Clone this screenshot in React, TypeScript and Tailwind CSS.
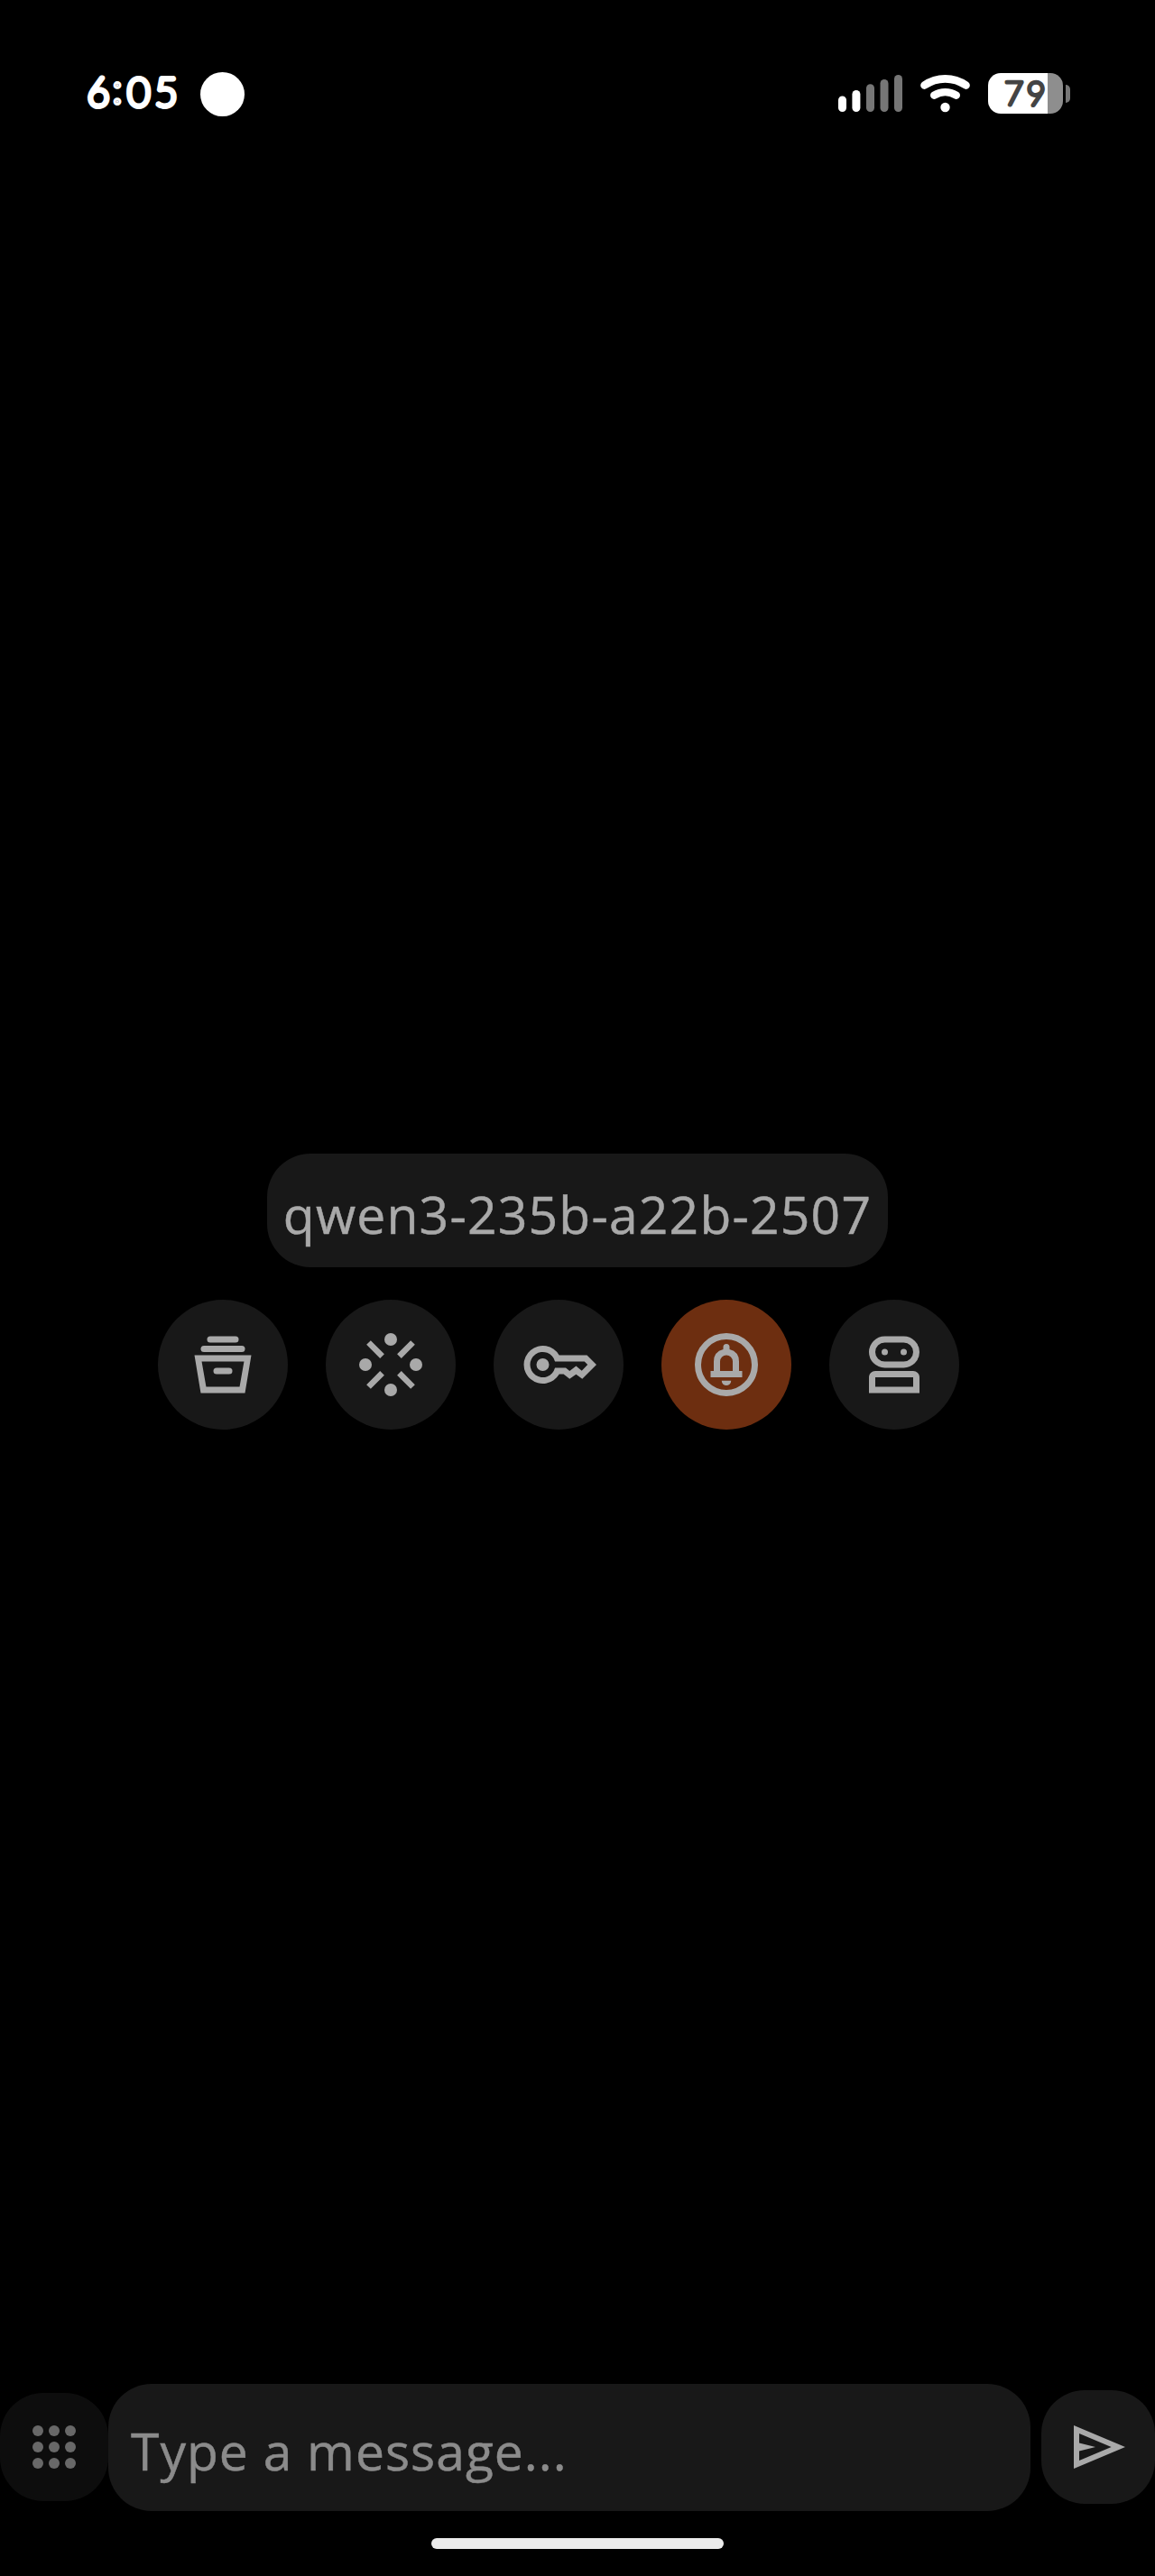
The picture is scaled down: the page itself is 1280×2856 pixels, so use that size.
import type { ReactNode } from "react";

function Signal() {
  return (
    <svg width="72" height="44" viewBox="929 82 72 44" aria-hidden="true">
      <rect x="929" y="106.5" width="9" height="17.5" rx="4.5" fill="#fff" />
      <rect x="944.4" y="100" width="9" height="24" rx="4.5" fill="#fff" />
      <rect x="960" y="93.3" width="9" height="30.7" rx="4.5" fill="#767676" />
      <rect x="975.5" y="88" width="9" height="36" rx="4.5" fill="#767676" />
      <rect x="991" y="83" width="9" height="41" rx="4.5" fill="#767676" />
    </svg>
  );
}

function Wifi() {
  return (
    <svg width="56" height="44" viewBox="1020 82 56 44" fill="none" stroke="#fff" strokeWidth="8.6" strokeLinecap="round" aria-hidden="true">
      <path d="M1024.5 94.6A40 40 0 0 1 1070.5 94.6" />
      <path d="M1035.3 105.6A24 24 0 0 1 1059.7 105.6" />
      <circle cx="1047.5" cy="119" r="5.2" fill="#fff" stroke="none" />
    </svg>
  );
}

function Battery() {
  return (
    <div className="mb-px flex items-center gap-[3px]">
      <div className="flex h-[45px] w-[83px] overflow-hidden rounded-[14px] bg-[linear-gradient(to_right,#fff_66px,#8e8e8e_66px)]">
        <svg className="block" width="83" height="45" viewBox="0 0 83 45" aria-hidden="true">
          <text x="28.7 53.3" y="35" textAnchor="middle" fontFamily="Lato, sans-serif" fontWeight="100" fontSize="36" fill="#444" stroke="#444" strokeWidth="4.6" strokeLinejoin="round">79</text>
        </svg>
      </div>
      <div className="h-5 w-[5px] rounded-r-[5px] bg-[#767676]" />
    </div>
  );
}

function StatusBar() {
  return (
    <header className="flex h-[208px] shrink-0 items-center justify-between pr-[94px] pl-[92px]">
      <div className="flex items-center gap-[18px]">
        <svg width="112" height="60" viewBox="0 0 112 60" aria-hidden="true">
          <text x="17 38 61.7 92.3" y="43.6 40.4 43.6 43.6" textAnchor="middle" fontFamily="Lato, sans-serif" fontWeight="100" fontSize="43" fill="#fff" stroke="#fff" strokeWidth="6" strokeLinejoin="round">6:05</text>
        </svg>
        <div className="mt-px size-[49px] rounded-full bg-white" />
      </div>
      <div className="flex items-center gap-[19px]">
        <Signal />
        <Wifi />
        <Battery />
      </div>
    </header>
  );
}

function ActionButton({ label, active = false, children }: { label: string; active?: boolean; children: ReactNode }) {
  return (
    <button
      aria-label={label}
      className={`flex size-36 items-center justify-center rounded-full text-[#a9a9a9] ${active ? "bg-[#6d2e10]" : "bg-[#181818]"}`}
    >
      <svg width="84" height="84" viewBox="0 0 24 24" fill="currentColor">
        {children}
      </svg>
    </button>
  );
}

function Actions() {
  return (
    <div className="mt-9 ml-[175px] flex gap-[42px]">
      <ActionButton label="History">
        <rect x="7" y="3" width="10" height="2" rx="1" />
        <rect x="5" y="6" width="14" height="2" rx="1" />
        <path fillRule="evenodd" d="M3 9H21L19 21H5ZM5.3 11L6.7 19H17.3L18.7 11Z" />
        <rect x="9" y="13" width="6" height="2" rx="1" />
      </ActionButton>
      <ActionButton label="Model">
        <circle cx="12" cy="4" r="2" />
        <circle cx="20" cy="12" r="2" />
        <circle cx="12" cy="20" r="2" />
        <circle cx="4" cy="12" r="2" />
        <path d="M5 5 9.3 9.3M19 5 14.7 9.3M5 19 9.3 14.7M19 19 14.7 14.7" stroke="currentColor" strokeWidth="1.9" />
      </ActionButton>
      <ActionButton label="API key">
        <path fillRule="evenodd" d="M12.2 9H21L24 12 19.5 16.5 17.55 15.05 15.5 16.5 13.6 15H12.2A6 6 0 1 1 12.2 9ZM10.87 13H14.3L15.5 14 17.55 12.4 19.35 13.9 21.2 12 20.2 11H10.87A4 4 0 1 0 10.87 13Z" />
        <circle cx="7" cy="12" r="2" />
      </ActionButton>
      <ActionButton label="Notifications" active>
        <circle cx="12" cy="12" r="9" fill="none" stroke="currentColor" strokeWidth="2" />
        <path fillRule="evenodd" d="M7 14H8V11Q8 7.9 11 7.15V6.4A1 1 0 0 1 13 6.4V7.15Q16 7.9 16 11V14H17V16H7ZM10 14H14V11A2 2 0 0 0 10 11Z" />
        <path d="M10.5 17.05H13.5A1.5 1.5 0 0 1 10.5 17.05Z" />
      </ActionButton>
      <ActionButton label="Assistant">
        <rect x="5" y="4" width="14" height="8" rx="4" fill="none" stroke="currentColor" strokeWidth="2" />
        <circle cx="9" cy="8" r="1" />
        <circle cx="15" cy="8" r="1" />
        <path fillRule="evenodd" d="M4 21V16A2 2 0 0 1 6 14H18A2 2 0 0 1 20 16V21ZM6 19H18V16H6Z" />
      </ActionButton>
    </div>
  );
}

function Composer() {
  return (
    <div className="flex items-start">
      <button aria-label="Menu" className="mt-2.5 grid size-[120px] shrink-0 grid-cols-[repeat(3,12px)] content-start gap-1.5 rounded-[48px] bg-[#0d0d0d] p-9">
        {Array.from({ length: 9 }, (_, i) => (
          <span key={i} className="size-3 rounded-full bg-[#686868]" />
        ))}
      </button>
      <div className="h-[141px] w-[1022px] rounded-[48px] bg-[#181818] pt-[9px] pl-[25px] font-['Open_Sans',sans-serif] text-[57px] leading-[130px] tracking-[1px] whitespace-nowrap text-[#8b8b8b] [-webkit-text-stroke:0.5px_#8b8b8b]">
        Type a message...
      </div>
      <button aria-label="Send" className="mt-[7px] ml-3 flex size-[126px] shrink-0 items-center justify-center rounded-[48px] bg-[#181818] text-[#a9a9a9]">
        <svg width="72" height="72" viewBox="0 0 24 24" fill="currentColor">
          <path d="M3 20V4l19 8-19 8Zm2-3 11.85-5L5 7v3.5l6 1.5-6 1.5V17Z" />
        </svg>
      </button>
    </div>
  );
}

export default function App() {
  return (
    <div className="flex h-[2856px] w-[1280px] flex-col overflow-hidden bg-black">
      <StatusBar />
      <main className="flex-1 pt-[1071px]">
        <div className="mx-auto h-[126px] w-[688px] rounded-[48px] bg-[#181818] pt-2.5 text-center font-['Open_Sans',sans-serif] text-[57px] leading-[114px] tracking-[1.2px] whitespace-nowrap text-[#a9a9a9] [-webkit-text-stroke:0.5px_#a9a9a9]">
          qwen3-235b-a22b-2507
        </div>
        <Actions />
      </main>
      <Composer />
      <div className="mx-auto mt-[30px] mb-[30px] h-3 w-[324px] shrink-0 rounded-full bg-[#ebebeb]" />
    </div>
  );
}
